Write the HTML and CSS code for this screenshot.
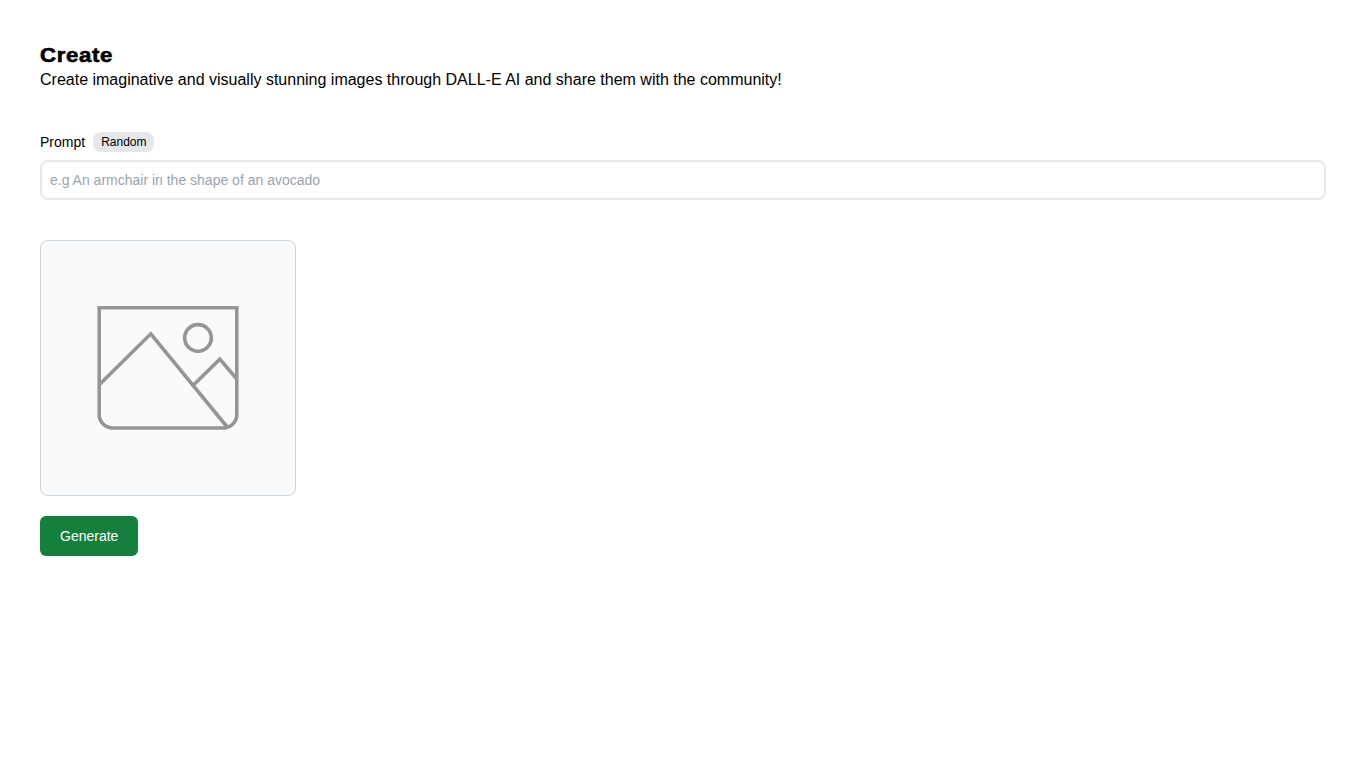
FILE: index.html
```html
<!DOCTYPE html>
<html lang="en">
<head>
<meta charset="utf-8">
<title>Create</title>
<link rel="stylesheet" href="styles.css">
</head>
<body>
<main class="page">
  <header class="intro">
    <h1 class="title">Create</h1>
    <p class="subtitle">Create imaginative and visually stunning images through DALL-E AI and share them with the community!</p>
  </header>
  <form class="form">
    <div class="label-row">
      <label class="label" for="prompt">Prompt</label>
      <button class="random" type="button">Random</button>
    </div>
    <input class="prompt" id="prompt" type="text" placeholder="e.g An armchair in the shape of an avocado">
    <div class="preview">
      <svg class="picture" viewBox="0 0 254 254" fill="none" stroke="#949596" stroke-width="3.6">
        <path d="M58.2 66.7H195.8V173.5A13.5 13.5 0 0 1 182.3 187H71.7A13.5 13.5 0 0 1 58.2 173.5Z"/>
        <path d="M58.5 143.5L109.8 92.8L187 187M152.5 144L178.8 118.2L195.8 138"/>
        <circle cx="157" cy="96.9" r="13.3"/>
      </svg>
    </div>
    <button class="generate" type="button">Generate</button>
  </form>
</main>
</body>
</html>
```
FILE: styles.css
```css
* { box-sizing: border-box; margin: 0; padding: 0; }
body { background: #fff; color: #000; font-family: "Liberation Sans", Arial, sans-serif; }
button, input { font: inherit; color: inherit; border: 0; }
.page { padding: 40px; }
.title { width: max-content; padding-top: 2px; font-size: 20px; font-weight: 800; line-height: 26px; letter-spacing: 0.6px; -webkit-text-stroke: 0.6px #000; transform: scaleX(1.11); transform-origin: left; }
.subtitle { font-size: 16px; line-height: 24px; }
.form { display: flex; flex-direction: column; align-items: flex-start; margin-top: 40px; }
.label-row { display: flex; align-items: center; gap: 8px; }
.label { font-size: 14px; line-height: 20px; }
.random { height: 20px; padding: 0 8px; border-radius: 8px; background: #e5e7eb; font-size: 12px; line-height: 20px; }
.prompt { width: 100%; height: 40px; margin-top: 8px; padding: 8px; border: 2px solid #e5e7eb; border-radius: 8px; font-size: 14px; }
.prompt::placeholder { color: #9ca3af; opacity: 1; }
.preview { width: 256px; height: 256px; margin-top: 40px; border: 1px solid #d1d5db; border-radius: 8px; background: #f9fafb; }
.picture { display: block; width: 254px; height: 254px; }
.generate { height: 40px; margin-top: 20px; padding: 0 20px; border-radius: 6px; background: #15803d; color: #fff; font-size: 14px; line-height: 20px; }
```
